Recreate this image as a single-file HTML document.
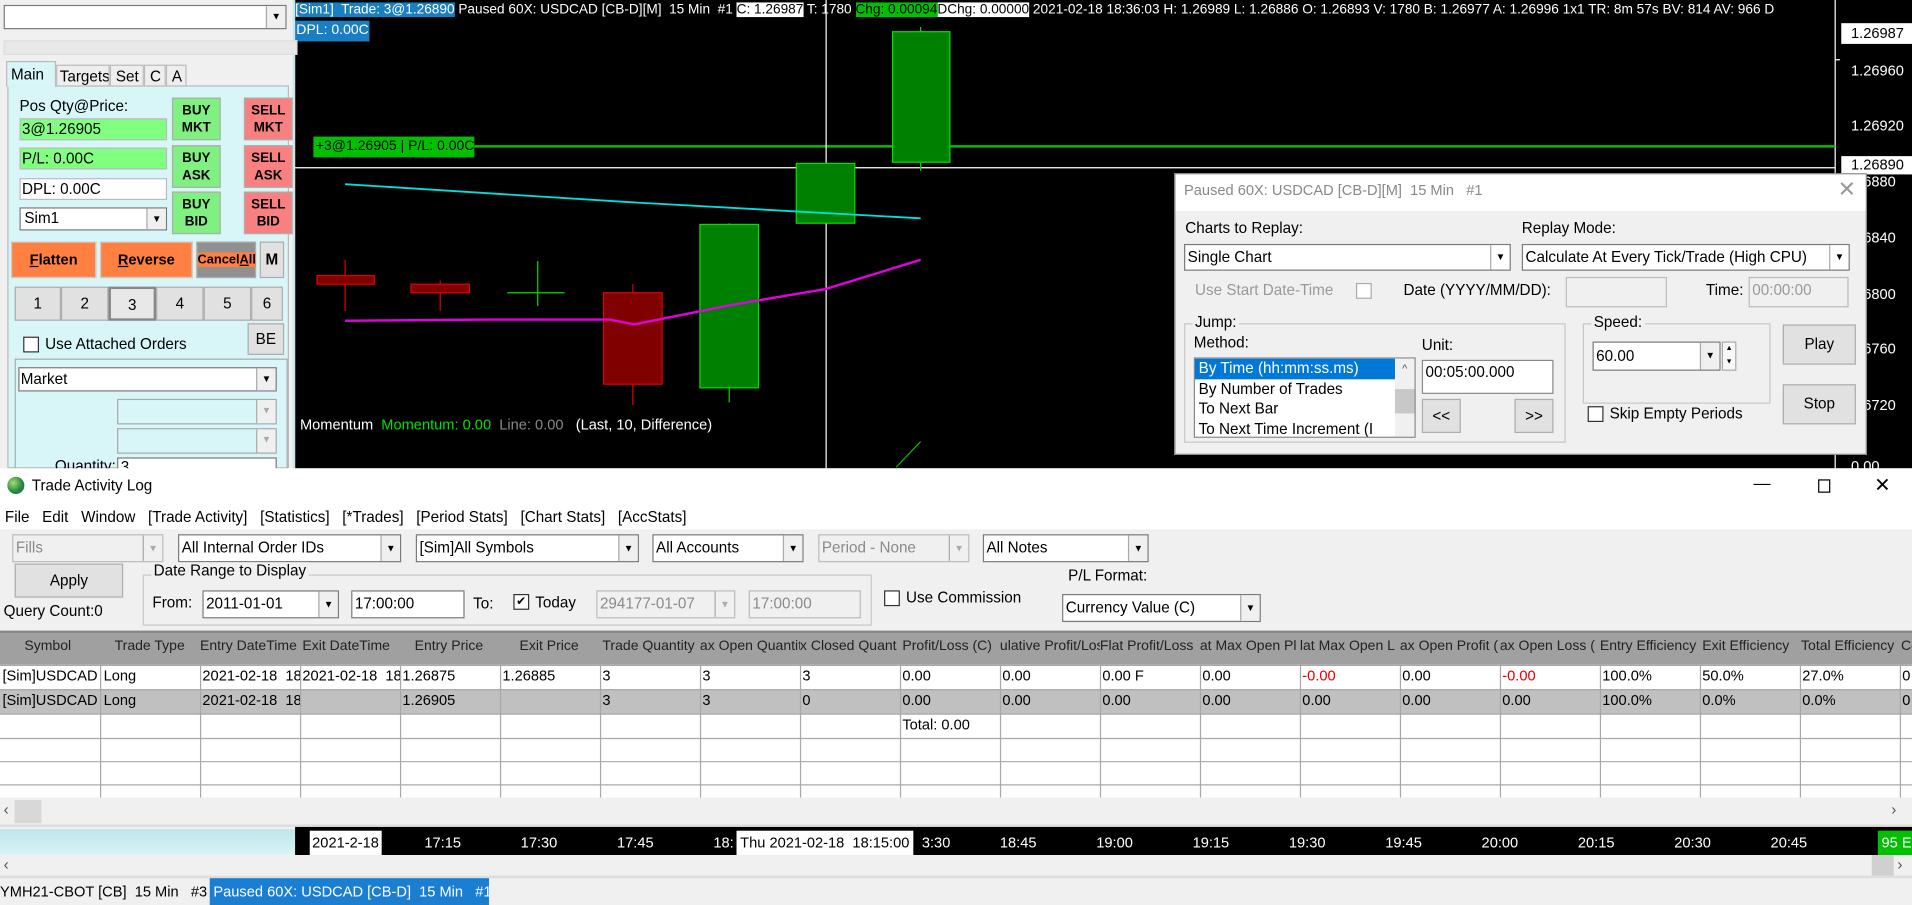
<!DOCTYPE html>
<html><head><meta charset="utf-8">
<style>
*{box-sizing:border-box;margin:0;padding:0}
html,body{width:1912px;height:905px;overflow:hidden;background:#f0f0f0}
#w{position:absolute;left:0;top:0;width:1568px;height:742px;transform:scale(1.21939,1.21968);transform-origin:0 0;font-family:"Liberation Sans",sans-serif;font-size:12.5px;color:#000;overflow:hidden;background:#f0f0f0}
.a{position:absolute;white-space:nowrap;overflow:hidden}
.cb{position:absolute;background:#fff;border:1px solid #7a7a7a;white-space:nowrap;overflow:hidden;padding-left:2px;line-height:18px}
.cb .ar{position:absolute;right:0;top:0;bottom:0;width:16px;background:#f0f0f0;border-left:1px solid #aaa;font-size:8px;text-align:center;line-height:18px}
.dis{background:#f0f0f0;color:#8a8a8a;border-color:#bbb}
.btn{position:absolute;background:#e1e1e1;border:1px solid #adadad;text-align:center}
.wb{color:#fff}
.chk{position:absolute;width:13px;height:13px;border:1px solid #333;background:#fff}
.gb{position:absolute;border:1px solid #c8c8c8}
.gb>span{position:absolute;left:6px;top:-9px;background:#f0f0f0;padding:0 2px}
</style></head><body><div id="w">

<!-- chart area -->
<div class="a" style="left:242px;top:0;width:1326px;height:384px;background:#000"></div>
<svg class="a" style="left:0;top:0" width="1568" height="384" viewBox="0 0 1568 384">
 <line x1="1505" y1="0" x2="1505" y2="384" stroke="#fff" stroke-width="1"/>
 <line x1="242" y1="137.5" x2="1505" y2="137.5" stroke="#fff"/>
 <line x1="389" y1="120" x2="1505" y2="120" stroke="#00c000" stroke-width="2"/>
 <line x1="677.5" y1="0" x2="677.5" y2="384" stroke="#fff"/>
 <line x1="283" y1="213" x2="283" y2="255" stroke="#e00000"/>
 <rect x="260" y="226" width="47" height="7" fill="#800000" stroke="#e00000"/>
 <line x1="361" y1="230" x2="361" y2="255" stroke="#e00000"/>
 <rect x="337" y="233" width="48" height="7" fill="#800000" stroke="#e00000"/>
 <line x1="441" y1="214" x2="441" y2="251" stroke="#00e000"/>
 <line x1="416" y1="240" x2="463" y2="240" stroke="#00e000"/>
 <line x1="519" y1="233" x2="519" y2="332" stroke="#e00000"/>
 <rect x="495" y="240" width="48" height="75" fill="#800000" stroke="#e00000"/>
 <line x1="598" y1="183" x2="598" y2="330" stroke="#00e000"/>
 <rect x="574" y="184" width="48" height="134" fill="#008000" stroke="#00e000"/>
 <rect x="653" y="134" width="48" height="49" fill="#008000" stroke="#00e000"/>
 <line x1="755" y1="22" x2="755" y2="140" stroke="#00e000"/>
 <rect x="732" y="26" width="47" height="107" fill="#008000" stroke="#00e000"/>
 <polyline points="283,151 520,166 755,179" fill="none" stroke="#00e0e0" stroke-width="1.5"/>
 <polyline points="283,263 400,262 500,262 520,266 600,250 677,237 755,213" fill="none" stroke="#e000e0" stroke-width="2"/>
 <line x1="735" y1="383" x2="755" y2="362" stroke="#00c000"/>
 <line x1="1505" y1="49" x2="1509" y2="49" stroke="#fff"/>
</svg>
<div class="a" style="left:257px;top:112px;width:132px;height:17px;background:#00c000;color:#000;font-size:11.5px;line-height:17px;padding-left:2px">+3@1.26905 | P/L: 0.00C</div>
<div class="a" style="left:242px;top:0;width:1263px;height:17px;font-size:11.2px;line-height:17px;color:#fff"><span style="background:#1a7fc1">[Sim1]&nbsp; Trade: 3@1.26890</span> Paused 60X: USDCAD [CB-D][M]&nbsp; 15 Min&nbsp; #1 <span style="background:#fff;color:#000">C: 1.26987</span> T: 1780 <span style="background:#00c000;color:#000">Chg: 0.00094</span><span style="background:#fff;color:#000">DChg: 0.00000</span> 2021-02-18 18:36:03 H: 1.26989 L: 1.26886 O: 1.26893 V: 1780 B: 1.26977 A: 1.26996 1x1 TR: 8m 57s BV: 814 AV: 966 D</div>
<div class="a" style="left:242px;top:17px;height:17px;font-size:11.5px;line-height:17px;color:#fff;background:#1a7fc1;padding:0 1px">DPL: 0.00C</div>
<div class="a" style="left:246px;top:341px;font-size:12px;color:#fff">Momentum&nbsp; <span style="color:#00e000">Momentum: 0.00</span>&nbsp; <span style="color:#888">Line: 0.00</span>&nbsp;&nbsp; (Last, 10, Difference)</div>
<!-- price axis -->
<div class="a" style="left:1510px;top:19px;width:58px;height:17px;background:#fff;font-size:12px;line-height:17px;padding-left:8px">1.26987</div>
<div class="a wb" style="left:1518px;top:51px;font-size:12px">1.26960</div>
<div class="a wb" style="left:1518px;top:96px;font-size:12px">1.26920</div>
<div class="a" style="left:1510px;top:128px;width:58px;height:15px;background:#fff;font-size:12px;line-height:15px;padding-left:8px">1.26890</div>
<div class="a wb" style="left:1518px;top:142px;font-size:12px">.26880</div>
<div class="a wb" style="left:1518px;top:188px;font-size:12px">.26840</div>
<div class="a wb" style="left:1518px;top:234px;font-size:12px">.26800</div>
<div class="a wb" style="left:1518px;top:279px;font-size:12px">.26760</div>
<div class="a wb" style="left:1518px;top:325px;font-size:12px">.26720</div>
<div class="a wb" style="left:1518px;top:375px;font-size:12px">0.00</div>

<!-- left panel -->
<div class="a" style="left:0;top:0;width:242px;height:384px;background:#f0f0f0;border-right:2px solid #c8e8ec"></div>
<div class="cb" style="left:3px;top:4px;width:232px;height:20px"><div class="ar">▼</div></div>
<div class="a" style="left:3px;top:33px;width:241px;height:12px;background:#e8e8e8;border:1px solid #ddd"></div>
<div class="a" style="left:6px;top:70px;width:231px;height:314px;background:#d8f6f8;border:1px solid #bbb"></div>
<div class="a" style="left:5px;top:50px;width:41px;height:21px;background:#d8f6f8;border:1px solid #bbb;border-bottom:none;padding:3px 0 0 3px">Main</div>
<div class="a" style="left:46px;top:53px;width:44px;height:18px;background:#eee;border:1px solid #bbb;padding:2px 0 0 2px">Targets</div>
<div class="a" style="left:90px;top:53px;width:28px;height:18px;background:#eee;border:1px solid #bbb;padding:2px 0 0 4px">Set</div>
<div class="a" style="left:118px;top:53px;width:18px;height:18px;background:#eee;border:1px solid #bbb;padding:2px 0 0 4px">C</div>
<div class="a" style="left:136px;top:53px;width:17px;height:18px;background:#eee;border:1px solid #bbb;padding:2px 0 0 4px">A</div>
<div class="a" style="left:16px;top:80px">Pos Qty@Price:</div>
<div class="a" style="left:16px;top:97px;width:121px;height:18px;background:#80ff80;border:1px solid #bbb;line-height:16px;padding-left:1px">3@1.26905</div>
<div class="a" style="left:16px;top:121px;width:121px;height:18px;background:#80ff80;border:1px solid #bbb;line-height:16px;padding-left:1px">P/L: 0.00C</div>
<div class="a" style="left:16px;top:146px;width:121px;height:18px;background:#fff;border:1px solid #bbb;line-height:16px;padding-left:1px">DPL: 0.00C</div>
<div class="cb" style="left:16px;top:170px;width:121px;height:19px;line-height:17px;padding-left:3px">Sim1<div class="ar" style="line-height:17px">▼</div></div>
<div class="btn" style="left:141px;top:80px;width:40px;height:35px;background:#80f080;font-weight:bold;font-size:11px;line-height:14px;padding-top:3px">BUY<br>MKT</div>
<div class="btn" style="left:141px;top:119px;width:40px;height:35px;background:#80f080;font-weight:bold;font-size:11px;line-height:14px;padding-top:3px">BUY<br>ASK</div>
<div class="btn" style="left:141px;top:157px;width:40px;height:35px;background:#80f080;font-weight:bold;font-size:11px;line-height:14px;padding-top:3px">BUY<br>BID</div>
<div class="btn" style="left:200px;top:80px;width:40px;height:35px;background:#f88080;font-weight:bold;font-size:11px;line-height:14px;padding-top:3px">SELL<br>MKT</div>
<div class="btn" style="left:200px;top:119px;width:40px;height:35px;background:#f88080;font-weight:bold;font-size:11px;line-height:14px;padding-top:3px">SELL<br>ASK</div>
<div class="btn" style="left:200px;top:157px;width:40px;height:35px;background:#f88080;font-weight:bold;font-size:11px;line-height:14px;padding-top:3px">SELL<br>BID</div>
<div class="btn" style="left:9px;top:198px;width:70px;height:30px;background:#ff8040;font-weight:bold;font-size:12px;line-height:28px;border-color:#ccc"><u>F</u>latten</div>
<div class="btn" style="left:82px;top:198px;width:76px;height:30px;background:#ff8040;font-weight:bold;font-size:12px;line-height:28px;border-color:#ccc"><u>R</u>everse</div>
<div class="btn" style="left:161px;top:198px;width:49px;height:30px;background:#909090;font-weight:bold;font-size:10.5px;line-height:28px"><span style="background:#ff8040">Cancel<u>A</u>ll</span></div>
<div class="btn" style="left:213px;top:198px;width:20px;height:30px;font-weight:bold;line-height:28px">M</div>
<div class="btn" style="left:12px;top:235px;width:38px;height:28px;line-height:26px">1</div>
<div class="btn" style="left:50px;top:235px;width:39px;height:28px;line-height:26px">2</div>
<div class="btn" style="left:89px;top:235px;width:39px;height:28px;line-height:26px;border:2px solid #888;background:#e8e8e8">3</div>
<div class="btn" style="left:128px;top:235px;width:39px;height:28px;line-height:26px">4</div>
<div class="btn" style="left:167px;top:235px;width:39px;height:28px;line-height:26px">5</div>
<div class="btn" style="left:206px;top:235px;width:26px;height:28px;line-height:26px">6</div>
<div class="chk" style="left:19px;top:276px"></div>
<div class="a" style="left:37px;top:275px">Use Attached Orders</div>
<div class="btn" style="left:203px;top:265px;width:30px;height:26px;line-height:24px">BE</div>
<div class="a" style="left:12px;top:294px;width:224px;height:92px;border:1px solid #aaa"></div>
<div class="cb" style="left:15px;top:301px;width:212px;height:20px;padding-left:1px">Market<div class="ar">▼</div></div>
<div class="cb" style="left:96px;top:327px;width:131px;height:21px;background:#d8f6f8;border-color:#aaa"><div class="ar" style="color:#aaa">▼</div></div>
<div class="cb" style="left:96px;top:351px;width:131px;height:21px;background:#d8f6f8;border-color:#aaa"><div class="ar" style="color:#aaa">▼</div></div>
<div class="a" style="left:45px;top:375px">Quantity:</div>
<div class="cb" style="left:96px;top:375px;width:131px;height:12px;line-height:14px">3</div>

<!-- replay dialog -->
<div class="a" style="left:963px;top:142px;width:568px;height:231px;background:#f0f0f0;border:1px solid #888"></div>
<div class="a" style="left:964px;top:143px;width:566px;height:30px;background:#fff"></div>
<div class="a" style="left:971px;top:149px;color:#888;font-size:12px">Paused 60X: USDCAD [CB-D][M]&nbsp; 15 Min&nbsp;&nbsp; #1</div>
<div class="a" style="left:1507px;top:145px;color:#999;font-size:18px">✕</div>
<div class="a" style="left:972px;top:180px">Charts to Replay:</div>
<div class="a" style="left:1248px;top:180px">Replay Mode:</div>
<div class="cb" style="left:971px;top:200px;width:268px;height:22px;line-height:20px">Single Chart<div class="ar" style="line-height:20px;background:#fff">▼</div></div>
<div class="cb" style="left:1248px;top:200px;width:269px;height:22px;line-height:20px">Calculate At Every Tick/Trade (High CPU)<div class="ar" style="line-height:20px;background:#fff">▼</div></div>
<div class="a" style="left:980px;top:231px;color:#999">Use Start Date-Time</div>
<div class="chk" style="left:1112px;top:232px;border-color:#aaa"></div>
<div class="a" style="left:1151px;top:231px">Date (YYYY/MM/DD):</div>
<div class="a" style="left:1284px;top:227px;width:83px;height:25px;border:1px solid #bbb"></div>
<div class="a" style="left:1399px;top:231px">Time:</div>
<div class="a" style="left:1434px;top:227px;width:82px;height:25px;border:1px solid #bbb;color:#999;padding:3px 0 0 2px">00:00:00</div>
<div class="gb" style="left:971px;top:265px;width:313px;height:98px"><span>Jump:</span></div>
<div class="a" style="left:979px;top:274px">Method:</div>
<div class="a" style="left:1166px;top:276px">Unit:</div>
<div class="a" style="left:979px;top:293px;width:182px;height:66px;background:#fff;border:1px solid #888;line-height:16.5px">
 <div style="background:#0078d7;color:#fff;width:164px;padding-left:3px">By Time (hh:mm:ss.ms)</div>
 <div style="padding-left:3px">By Number of Trades</div>
 <div style="padding-left:3px">To Next Bar</div>
 <div style="padding-left:3px">To Next Time Increment (I</div>
 <div style="position:absolute;right:0;top:0;width:16px;height:64px;background:#f0f0f0;font-size:9px;text-align:center;color:#555">^<div style="height:20px;background:#c8c8c8;margin-top:8px"></div></div>
</div>
<div class="a" style="left:1166px;top:295px;width:108px;height:28px;background:#fff;border:1px solid #888;padding:2px 0 0 2px">00:05:00.000</div>
<div class="btn" style="left:1166px;top:327px;width:32px;height:28px;line-height:26px">&lt;&lt;</div>
<div class="btn" style="left:1242px;top:327px;width:32px;height:28px;line-height:26px">&gt;&gt;</div>
<div class="gb" style="left:1298px;top:265px;width:154px;height:66px"><span>Speed:</span></div>
<div class="cb" style="left:1306px;top:280px;width:105px;height:24px;line-height:22px">60.00<div class="ar" style="line-height:22px">▼</div></div>
<div class="a" style="left:1412px;top:280px;width:12px;height:24px;border:1px solid #aaa;font-size:6px;text-align:center;line-height:11px;background:#f8f8f8">▲<br>▼</div>
<div class="btn" style="left:1462px;top:266px;width:60px;height:33px;line-height:31px">Play</div>
<div class="btn" style="left:1462px;top:315px;width:60px;height:33px;line-height:31px">Stop</div>
<div class="chk" style="left:1302px;top:333px"></div>
<div class="a" style="left:1320px;top:332px">Skip Empty Periods</div>

<!-- trade activity log -->
<div class="a" style="left:0;top:384px;width:1568px;height:296px;background:#f0f0f0"></div>
<div class="a" style="left:0;top:384px;width:1568px;height:50px;background:#fff"></div>
<div class="a" style="left:6px;top:391px;width:14px;height:14px;border-radius:50%;background:radial-gradient(circle at 35% 35%,#9fe07a,#2a8a3a 55%,#1a4fa0)"></div>
<div class="a" style="left:26px;top:391px">Trade Activity Log</div>
<div class="a" style="left:1438px;top:388px;font-size:14px">&#8212;</div>
<div class="a" style="left:1491px;top:393px;width:10px;height:11px;border:1px solid #000"></div>
<div class="a" style="left:1537px;top:388px;font-size:16px">✕</div>
<div class="a" style="left:4px;top:417px">File &nbsp; Edit &nbsp; Window &nbsp; [Trade Activity] &nbsp; [Statistics] &nbsp; [*Trades] &nbsp; [Period Stats] &nbsp; [Chart Stats] &nbsp; [AccStats]</div>
<div class="cb dis" style="left:10px;top:438px;width:124px;height:23px;line-height:21px">Fills<div class="ar" style="line-height:21px;color:#aaa">▼</div></div>
<div class="cb" style="left:146px;top:438px;width:183px;height:23px;line-height:21px">All Internal Order IDs<div class="ar" style="line-height:21px">▼</div></div>
<div class="cb" style="left:341px;top:438px;width:183px;height:23px;line-height:21px">[Sim]All Symbols<div class="ar" style="line-height:21px">▼</div></div>
<div class="cb" style="left:535px;top:438px;width:124px;height:23px;line-height:21px">All Accounts<div class="ar" style="line-height:21px">▼</div></div>
<div class="cb dis" style="left:671px;top:438px;width:124px;height:23px;line-height:21px">Period - None<div class="ar" style="line-height:21px;color:#aaa">▼</div></div>
<div class="cb" style="left:806px;top:438px;width:136px;height:23px;line-height:21px">All Notes<div class="ar" style="line-height:21px">▼</div></div>
<div class="btn" style="left:12px;top:462px;width:89px;height:28px;line-height:26px">Apply</div>
<div class="a" style="left:3px;top:494px">Query Count:0</div>
<div class="gb" style="left:117px;top:471px;width:598px;height:42px"><span style="top:-11px">Date Range to Display</span></div>
<div class="a" style="left:125px;top:487px">From:</div>
<div class="cb" style="left:166px;top:484px;width:112px;height:23px;line-height:21px">2011-01-01<div class="ar" style="line-height:21px">▼</div></div>
<div class="cb" style="left:288px;top:484px;width:93px;height:23px;line-height:21px">17:00:00</div>
<div class="a" style="left:388px;top:488px">To:</div>
<div class="chk" style="left:421px;top:487px;font-size:10px;line-height:11px;text-align:center">✔</div>
<div class="a" style="left:439px;top:487px">Today</div>
<div class="cb dis" style="left:489px;top:484px;width:114px;height:23px;line-height:21px">294177-01-07<div class="ar" style="line-height:21px;color:#aaa">▼</div></div>
<div class="cb dis" style="left:614px;top:484px;width:92px;height:23px;line-height:21px">17:00:00</div>
<div class="chk" style="left:725px;top:484px"></div>
<div class="a" style="left:743px;top:483px">Use Commission</div>
<div class="a" style="left:876px;top:465px">P/L Format:</div>
<div class="cb" style="left:871px;top:487px;width:163px;height:23px;line-height:21px">Currency Value (C)<div class="ar" style="line-height:21px">▼</div></div>

<!-- table -->
<div class="a" style="left:0;top:517px;width:1568px;height:2px;background:#888"></div>
<div class="a" style="left:0;top:519px;width:1568px;height:135px;background:#fff"></div>
<div class="a" style="left:0;top:519px;width:1568px;height:26px;background:#a0a0a0"></div>
<div class="a" style="left:0;top:565px;width:1568px;height:20px;background:#c0c0c0"></div>
<svg class="a" style="left:0;top:519px" width="1568" height="135">
 <g stroke="#a8a8a8">
 <line x1="0" y1="26.5" x2="1568" y2="26.5"/><line x1="0" y1="46.5" x2="1568" y2="46.5"/><line x1="0" y1="66.5" x2="1568" y2="66.5"/><line x1="0" y1="86.5" x2="1568" y2="86.5"/><line x1="0" y1="105.5" x2="1568" y2="105.5"/><line x1="0" y1="124.5" x2="1568" y2="124.5"/>
 <line x1="82.5" y1="26" x2="82.5" y2="135"/><line x1="164.5" y1="26" x2="164.5" y2="135"/><line x1="246.5" y1="26" x2="246.5" y2="135"/><line x1="328.5" y1="26" x2="328.5" y2="135"/><line x1="410.5" y1="26" x2="410.5" y2="135"/><line x1="492.5" y1="26" x2="492.5" y2="135"/><line x1="574.5" y1="26" x2="574.5" y2="135"/><line x1="656.5" y1="26" x2="656.5" y2="135"/><line x1="738.5" y1="26" x2="738.5" y2="135"/><line x1="820.5" y1="26" x2="820.5" y2="135"/><line x1="902.5" y1="26" x2="902.5" y2="135"/><line x1="984.5" y1="26" x2="984.5" y2="135"/><line x1="1066.5" y1="26" x2="1066.5" y2="135"/><line x1="1148.5" y1="26" x2="1148.5" y2="135"/><line x1="1230.5" y1="26" x2="1230.5" y2="135"/><line x1="1312.5" y1="26" x2="1312.5" y2="135"/><line x1="1394.5" y1="26" x2="1394.5" y2="135"/><line x1="1476.5" y1="26" x2="1476.5" y2="135"/><line x1="1558.5" y1="26" x2="1558.5" y2="135"/>
 </g>
</svg>
<div class="a" style="left:0;top:524px;width:1568px;height:18px;font-size:11.5px;color:#222">
<span class="a" style="left:20px">Symbol</span><span class="a" style="left:94px">Trade Type</span><span class="a" style="left:164px;width:82px">Entry DateTime</span><span class="a" style="left:248px;width:80px">Exit DateTime</span><span class="a" style="left:340px">Entry Price</span><span class="a" style="left:426px">Exit Price</span><span class="a" style="left:494px;width:80px">Trade Quantity</span><span class="a" style="left:574px;width:82px">ax Open Quantit</span><span class="a" style="left:656px;width:82px">x Closed Quant</span><span class="a" style="left:740px;width:80px">Profit/Loss (C)</span><span class="a" style="left:820px;width:82px">ulative Profit/Los</span><span class="a" style="left:902px;width:82px">Flat Profit/Loss</span><span class="a" style="left:984px;width:82px">at Max Open Pl</span><span class="a" style="left:1066px;width:82px">lat Max Open L</span><span class="a" style="left:1148px;width:82px">ax Open Profit (</span><span class="a" style="left:1230px;width:82px">ax Open Loss (</span><span class="a" style="left:1312px;width:82px">Entry Efficiency</span><span class="a" style="left:1396px;width:80px">Exit Efficiency</span><span class="a" style="left:1477px;width:81px">Total Efficiency</span><span class="a" style="left:1559px">Co</span></div>
<div class="a" style="left:0;top:547px;width:1568px;height:18px;font-size:12px">
<span class="a" style="left:2px;width:80px">[Sim]USDCAD</span><span class="a" style="left:85px">Long</span><span class="a" style="left:166px;width:80px">2021-02-18&nbsp; 18</span><span class="a" style="left:248px;width:80px">2021-02-18&nbsp; 18</span><span class="a" style="left:330px">1.26875</span><span class="a" style="left:412px">1.26885</span><span class="a" style="left:494px">3</span><span class="a" style="left:576px">3</span><span class="a" style="left:658px">3</span><span class="a" style="left:740px">0.00</span><span class="a" style="left:822px">0.00</span><span class="a" style="left:904px">0.00 F</span><span class="a" style="left:986px">0.00</span><span class="a" style="left:1068px;color:#e00000">-0.00</span><span class="a" style="left:1150px">0.00</span><span class="a" style="left:1232px;color:#e00000">-0.00</span><span class="a" style="left:1314px">100.0%</span><span class="a" style="left:1396px">50.0%</span><span class="a" style="left:1478px">27.0%</span><span class="a" style="left:1560px">0</span></div>
<div class="a" style="left:0;top:567px;width:1568px;height:18px;font-size:12px">
<span class="a" style="left:2px;width:80px">[Sim]USDCAD</span><span class="a" style="left:85px">Long</span><span class="a" style="left:166px;width:80px">2021-02-18&nbsp; 18</span><span class="a" style="left:330px">1.26905</span><span class="a" style="left:494px">3</span><span class="a" style="left:576px">3</span><span class="a" style="left:658px">0</span><span class="a" style="left:740px">0.00</span><span class="a" style="left:822px">0.00</span><span class="a" style="left:904px">0.00</span><span class="a" style="left:986px">0.00</span><span class="a" style="left:1068px">0.00</span><span class="a" style="left:1150px">0.00</span><span class="a" style="left:1232px">0.00</span><span class="a" style="left:1314px">100.0%</span><span class="a" style="left:1396px">0.0%</span><span class="a" style="left:1478px">0.0%</span><span class="a" style="left:1560px">0</span></div>
<div class="a" style="left:740px;top:587px;font-size:12px">Total: 0.00</div>
<div class="a" style="left:0;top:654px;width:1568px;height:22px;background:#f0f0f0"></div>
<div class="a" style="left:3px;top:657px;color:#555">‹</div>
<div class="a" style="left:12px;top:656px;width:22px;height:19px;background:#d8d8d8"></div>
<div class="a" style="left:1551px;top:657px;color:#555">›</div>
<div class="a" style="left:0;top:676px;width:1568px;height:2px;background:#ddd"></div>

<!-- time axis -->
<div class="a" style="left:0;top:680px;width:242px;height:21px;background:linear-gradient(#bfe5ea,#d8f6f8)"></div>
<div class="a" style="left:242px;top:678px;width:1326px;height:23px;background:#000"></div>
<div class="a" style="left:242px;top:681px;width:1326px;height:20px;font-size:12px;line-height:20px;color:#fff">
<span class="a" style="left:12px;background:#fff;color:#000;padding:0 2px">2021-2-18</span><span class="a" style="left:106px">17:15</span><span class="a" style="left:185px">17:30</span><span class="a" style="left:264px">17:45</span><span class="a" style="left:343px">18:</span><span class="a" style="left:362px;background:#fff;color:#000;padding:0 3px">Thu 2021-02-18&nbsp; 18:15:00</span><span class="a" style="left:514px">3:30</span><span class="a" style="left:578px">18:45</span><span class="a" style="left:657px">19:00</span><span class="a" style="left:736px">19:15</span><span class="a" style="left:815px">19:30</span><span class="a" style="left:894px">19:45</span><span class="a" style="left:973px">20:00</span><span class="a" style="left:1052px">20:15</span><span class="a" style="left:1131px">20:30</span><span class="a" style="left:1210px">20:45</span><span class="a" style="left:1298px;background:#00c000;color:#fff;width:28px;padding-left:3px">95 E</span></div>
<div class="a" style="left:0;top:701px;width:1568px;height:18px;background:#f0f0f0"></div>
<div class="a" style="left:3px;top:702px;color:#555">‹</div>
<div class="a" style="left:1535px;top:701px;width:18px;height:17px;background:#d0d0d0"></div>
<div class="a" style="left:1556px;top:702px;color:#555">›</div>
<div class="a" style="left:0;top:718px;width:1568px;height:2px;background:#ddd"></div>
<div class="a" style="left:0;top:721px;height:21px;line-height:21px;font-size:12px">YMH21-CBOT [CB]&nbsp; 15 Min&nbsp;&nbsp; #3</div>
<div class="a" style="left:172px;top:720px;width:229px;height:22px;line-height:22px;font-size:12px;background:#1a7fd0;color:#fff;padding-left:3px">Paused 60X: USDCAD [CB-D]&nbsp; 15 Min&nbsp;&nbsp; #1</div>
</div></body></html>
